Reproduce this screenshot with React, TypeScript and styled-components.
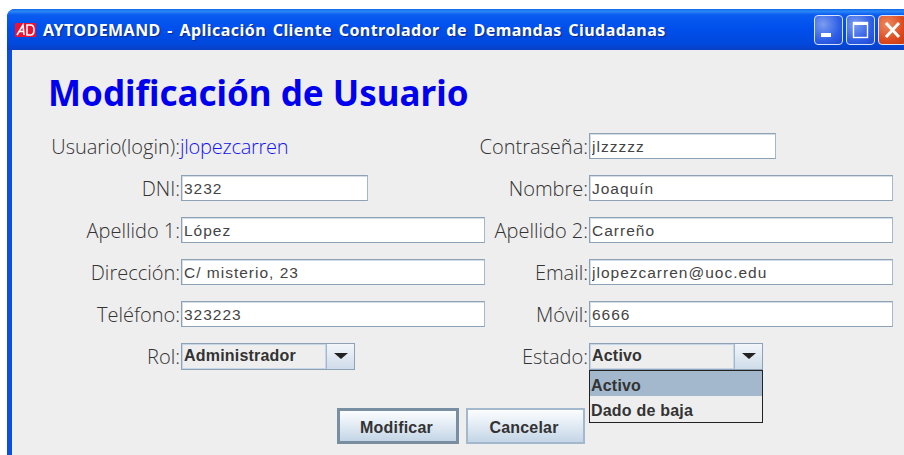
import styled, { createGlobalStyle } from 'styled-components';

const GlobalStyle = createGlobalStyle`
  html, body {
    margin: 0;
    height: 100%;
    background: #fff;
    overflow: hidden;
  }
`;

const Page = styled.div`
  padding: 9px 0 0 7px;
  width: 904px;
  height: 455px;
  box-sizing: border-box;
  overflow: hidden;
`;

const Window = styled.div`
  width: 912px;
  height: 460px;
  background: #0a4fe0;
  border-radius: 8px 8px 0 0;
  overflow: hidden;
`;

const TitleBar = styled.div`
  height: 41px;
  display: flex;
  align-items: center;
  padding-left: 8px;
  background: linear-gradient(180deg, #0f6be8 0%, #2a86f4 6%, #0a5cf0 14%, #0050ee 45%, #0148dc 85%, #0a3fc4 100%);
`;

const Logo = styled.svg`
  width: 21px;
  height: 14px;
  margin-right: 7px;
  flex: none;
`;

const TitleText = styled.span`
  flex: 1;
  font: bold 16px "Noto Sans", sans-serif;
  letter-spacing: 0.45px;
  word-spacing: 2px;
  color: #fff;
  white-space: nowrap;
  text-shadow: 1px 1px 1px #0a2a8c;
`;

const Controls = styled.div`
  display: flex;
  gap: 3px;
  margin-right: 12px;
`;

const Control = styled.div<{ $close?: boolean }>`
  width: 29px;
  height: 30px;
  box-sizing: border-box;
  border: 1px solid #d8e4fb;
  border-radius: 4px;
  background: ${({ $close }) =>
    $close
      ? 'radial-gradient(circle at 30% 30%, #ee8a60, #dc4a1e 60%, #c43810)'
      : 'radial-gradient(circle at 30% 30%, #7c9cf0, #2e5fe6 60%, #1f47d0)'};
  display: flex;
  align-items: center;
  justify-content: center;
`;

const Body = styled.div`
  margin-left: 5px;
  height: 419px;
  background: #eeeeee;
  padding: 24px 0 0 36px;
  box-sizing: border-box;
`;

const Heading = styled.h1`
  margin: 0;
  height: 59px;
  font: bold 35px "Noto Sans", sans-serif;
  line-height: 38px;
  color: #0000ee;
  white-space: nowrap;
`;

const FormGrid = styled.div`
  display: grid;
  grid-template-columns: 133px 304px 104px 304px;
  grid-auto-rows: 26px;
  row-gap: 16px;
  align-items: center;
`;

const Label = styled.label`
  justify-self: end;
  font: 300 20px "Open Sans", sans-serif;
  color: #333;
  white-space: nowrap;
  padding-right: 1px;
`;

const LoginValue = styled.span`
  font: 300 20px "Open Sans", sans-serif;
  letter-spacing: -0.25px;
  margin-left: -1px;
  color: #1414f0;
`;

const TextField = styled.input<{ $short?: boolean }>`
  width: ${({ $short }) => ($short ? '187px' : '304px')};
  height: 26px;
  box-sizing: border-box;
  border: 1px solid #8ea2b6;
  border-right-color: #a3b8cc;
  box-shadow: inset 1px 1px 0 #d4dde6;
  background: #fff;
  padding: 2px 0 0 2px;
  font: 15.5px "Liberation Sans", sans-serif;
  letter-spacing: 1px;
  color: #444;
  outline: none;
`;

const ComboWrap = styled.div`
  position: relative;
  width: 174px;
  height: 27px;
`;

const Combo = styled.div`
  display: flex;
  height: 27px;
  box-sizing: border-box;
  border: 1px solid #8ea2b6;
  background: #dfe8f2;
`;

const ComboValue = styled.div`
  flex: 1;
  border: 1px solid #c6d6e8;
  background: #eeeeee;
  padding-left: 1px;
  font: bold 16px/22px "Liberation Sans", sans-serif;
  letter-spacing: 0.2px;
  color: #333;
`;

const ComboArrow = styled.div`
  width: 27px;
  border-left: 1px solid #a3b8cc;
  background: linear-gradient(180deg, #f2f6fa, #cfdcea);
  display: flex;
  align-items: center;
  justify-content: center;
  &::after {
    content: '';
    border-style: solid;
    border-width: 6px 7px 0;
    border-color: #222 transparent transparent;
  }
`;

const Popup = styled.div`
  position: absolute;
  top: 27px;
  left: 0;
  right: 0;
  height: 53px;
  box-sizing: border-box;
  border: 1px solid #222;
  background: #eeeeee;
`;

const PopupItem = styled.div<{ $selected?: boolean }>`
  height: 25px;
  padding-left: 1px;
  font: bold 16px/29px "Liberation Sans", sans-serif;
  letter-spacing: 0.2px;
  color: #333;
  background: ${({ $selected }) => ($selected ? '#a3b8cc' : 'transparent')};
`;

const Buttons = styled.div`
  display: flex;
  gap: 7px;
  padding: 39px 0 0 289px;
`;

const ActionButton = styled.button<{ $focused?: boolean }>`
  width: ${({ $focused }) => ($focused ? '122px' : '119px')};
  height: 36px;
  box-sizing: border-box;
  border: ${({ $focused }) => ($focused ? '3px solid #7a8ea2' : '2px solid #a3b8cc')};
  background: linear-gradient(180deg, #fbfdfe 0%, #e6eef6 40%, #c4d5e6 100%);
  font: bold 16px "Liberation Sans", sans-serif;
  letter-spacing: 0.2px;
  color: #333;
  padding: 4px 3px 0 0;
`;

export default function App(): JSX.Element {
  return (
    <>
      <GlobalStyle />
      <Page>
        <Window>
          <TitleBar>
            <Logo viewBox="0 0 21 14">
              <rect width="21" height="14" rx="1" fill="#ee1133" />
              <path d="M2 12 L8 2 L9 12 M4 8.5 H9" stroke="#fff" strokeWidth="1.6" fill="none" />
              <path d="M12 2 H15.5 Q19 2 19 7 Q19 12 15.5 12 H12 Z" stroke="#fff" strokeWidth="1.6" fill="none" />
            </Logo>
            <TitleText>AYTODEMAND - Aplicación Cliente Controlador de Demandas Ciudadanas</TitleText>
            <Controls>
              <Control>
                <svg width="27" height="28" viewBox="0 0 27 28">
                  <rect x="6" y="17" width="10" height="4" fill="#fff" />
                </svg>
              </Control>
              <Control>
                <svg width="27" height="28" viewBox="0 0 27 28">
                  <rect x="6.5" y="6.5" width="14" height="15" fill="none" stroke="#fff" strokeWidth="1.4" />
                  <rect x="6" y="6" width="15" height="3" fill="#fff" />
                </svg>
              </Control>
              <Control $close>
                <svg width="27" height="28" viewBox="0 0 27 28">
                  <path d="M7 7 L20 21 M20 7 L7 21" stroke="#fff" strokeWidth="3" />
                </svg>
              </Control>
            </Controls>
          </TitleBar>
          <Body>
            <Heading>Modificación de Usuario</Heading>
            <FormGrid>
              <Label>Usuario(login):</Label>
              <LoginValue>jlopezcarren</LoginValue>
              <Label>Contraseña:</Label>
              <TextField $short readOnly value="jlzzzzz" />

              <Label>DNI:</Label>
              <TextField $short readOnly value="3232" />
              <Label>Nombre:</Label>
              <TextField readOnly value="Joaquín" />

              <Label>Apellido 1:</Label>
              <TextField readOnly value="López" />
              <Label>Apellido 2:</Label>
              <TextField readOnly value="Carreño" />

              <Label>Dirección:</Label>
              <TextField readOnly value="C/ misterio, 23" />
              <Label>Email:</Label>
              <TextField readOnly value="jlopezcarren@uoc.edu" />

              <Label>Teléfono:</Label>
              <TextField readOnly value="323223" />
              <Label>Móvil:</Label>
              <TextField readOnly value="6666" />

              <Label>Rol:</Label>
              <ComboWrap>
                <Combo>
                  <ComboValue>Administrador</ComboValue>
                  <ComboArrow />
                </Combo>
              </ComboWrap>
              <Label>Estado:</Label>
              <ComboWrap>
                <Combo>
                  <ComboValue>Activo</ComboValue>
                  <ComboArrow />
                </Combo>
                <Popup>
                  <PopupItem $selected>Activo</PopupItem>
                  <PopupItem>Dado de baja</PopupItem>
                </Popup>
              </ComboWrap>
            </FormGrid>
            <Buttons>
              <ActionButton $focused>Modificar</ActionButton>
              <ActionButton>Cancelar</ActionButton>
            </Buttons>
          </Body>
        </Window>
      </Page>
    </>
  );
}
